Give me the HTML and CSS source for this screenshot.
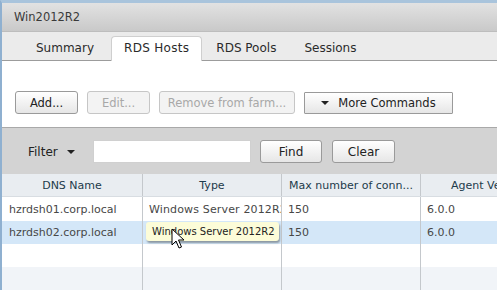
FILE: index.html
```html
<!DOCTYPE html>
<html>
<head>
<meta charset="utf-8">
<link rel="stylesheet" href="styles.css">
</head>
<body>
<div class="app">
  <div class="titlebar">Win2012R2</div>
  <div class="tabs">
    <div class="tab">Summary</div>
    <div class="tab active">RDS Hosts</div>
    <div class="tab">RDS Pools</div>
    <div class="tab">Sessions</div>
  </div>
  <div class="toolbar">
    <button class="btn btn-add">Add...</button>
    <button class="btn btn-edit disabled">Edit...</button>
    <button class="btn btn-remove disabled">Remove from farm...</button>
    <button class="btn btn-more"><span class="caret"></span>More Commands</button>
  </div>
  <div class="filterbar">
    <div class="filter-label">Filter <span class="caret"></span></div>
    <div class="filter-input"></div>
    <button class="btn btn-find">Find</button>
    <button class="btn btn-clear">Clear</button>
  </div>
  <div class="grid">
    <div class="row header">
      <div class="cell c1">DNS Name</div>
      <div class="cell c2">Type</div>
      <div class="cell c3">Max number of conn...</div>
      <div class="cell c4">Agent Version</div>
    </div>
    <div class="row first">
      <div class="cell c1">hzrdsh01.corp.local</div>
      <div class="cell c2">Windows Server 2012R2</div>
      <div class="cell c3">150</div>
      <div class="cell c4">6.0.0</div>
    </div>
    <div class="row selected">
      <div class="cell c1">hzrdsh02.corp.local</div>
      <div class="cell c2 has-tip">
        <div class="tooltip">Windows Server 2012R2</div>
        <svg class="cursor" width="14" height="22" viewBox="0 0 14 22"><path d="M1 1 L1 17 L5 13 L8 20 L10.5 19 L7.5 12 L13 12 Z" fill="#fff" stroke="#000" stroke-width="1"/></svg>
      </div>
      <div class="cell c3">150</div>
      <div class="cell c4">6.0.0</div>
    </div>
    <div class="row">
      <div class="cell c1"></div>
      <div class="cell c2"></div>
      <div class="cell c3"></div>
      <div class="cell c4"></div>
    </div>
    <div class="row alt">
      <div class="cell c1"></div>
      <div class="cell c2"></div>
      <div class="cell c3"></div>
      <div class="cell c4"></div>
    </div>
  </div>
</div>
</body>
</html>
```

FILE: styles.css
```css
html, body {
  margin: 0;
  padding: 0;
  width: 497px;
  height: 290px;
  overflow: hidden;
  background: #fff;
  font-family: "DejaVu Sans", Verdana, sans-serif;
}
.app {
  width: 497px;
  height: 290px;
  box-sizing: border-box;
  border-left: 2px solid #8fb0d0;
  border-top: 3px solid #a9c4dc;
  display: flex;
  flex-direction: column;
  overflow: hidden;
}
.titlebar {
  height: 29px;
  flex: none;
  box-sizing: border-box;
  padding-left: 12px;
  line-height: 29px;
  font-size: 11.5px;
  color: #3a3a3a;
  background: linear-gradient(#e2e2e2, #c9c9c9);
  border-bottom: 1px solid #bdbdbd;
}
.tabs {
  height: 29px;
  flex: none;
  box-sizing: border-box;
  display: flex;
  align-items: flex-end;
  background: #ebebeb;
  border-bottom: 1px solid #9c9c9c;
  padding-left: 20px;
}
.tab {
  height: 24px;
  box-sizing: border-box;
  line-height: 23px;
  padding: 0 13px;
  font-size: 12px;
  color: #2a2a2a;
  border: 1px solid transparent;
  border-bottom: none;
  border-radius: 4px 4px 0 0;
}
.tab.active {
  background: #fff;
  border-color: #cfcfcf;
  height: 25px;
  margin-bottom: -1px;
  margin-left: 3px;
  padding: 0 12px;
  letter-spacing: 0.3px;
}
.toolbar {
  height: 66px;
  flex: none;
  box-sizing: border-box;
  padding: 30px 0 0 13px;
  display: flex;
  align-items: flex-start;
  gap: 9px;
  background: #fff;
}
.btn {
  height: 23px;
  box-sizing: border-box;
  font-family: "DejaVu Sans", Verdana, sans-serif;
  font-size: 11.5px;
  color: #222;
  border: 1px solid #9a9a9a;
  border-radius: 3px;
  background: linear-gradient(#ffffff, #e6e6e6);
  padding: 0;
  display: flex;
  align-items: center;
  justify-content: center;
}
.btn.disabled {
  color: #a8a8a8;
  border-color: #c6c6c6;
  background: #f3f3f3;
}
.btn-add { width: 63px; }
.btn-edit { width: 63px; }
.btn-remove { width: 136px; }
.btn-more { width: 149px; margin-top: 1px; height: 22px; border-radius: 1px; }
.caret {
  display: inline-block;
  width: 0;
  height: 0;
  border-left: 4px solid transparent;
  border-right: 4px solid transparent;
  border-top: 4px solid #222;
  vertical-align: middle;
}
.btn-more .caret { margin-right: 9px; }
.filterbar {
  height: 47px;
  flex: none;
  box-sizing: border-box;
  background: #d3d3d3;
  border-top: 1px solid #a9a9a9;
  display: flex;
  align-items: center;
  padding-left: 26px;
  padding-top: 1px;
}
.filter-label {
  font-size: 12px;
  color: #222;
  width: 65px;
}
.filter-label .caret { margin-left: 5px; }
.filter-input {
  width: 158px;
  height: 23px;
  background: #fff;
  border: 1px solid #d0d0d0;
  box-sizing: border-box;
}
.btn-find { width: 62px; margin-left: 9px; font-size: 12px; }
.btn-clear { width: 63px; margin-left: 10px; font-size: 12px; }
.grid {
  flex: 1;
  display: flex;
  flex-direction: column;
  overflow: hidden;
}
.row {
  display: flex;
  height: 23px;
  flex: none;
  background: #fff;
}
.row.header {
  height: 22px;
  background: #e9edf1;
  border-bottom: 1px solid #d8dde2;
}
.row.header .cell {
  color: #1d3b4b;
  justify-content: center;
  padding-left: 0;
}
.row.first { height: 24px; }
.row.selected { background: #d4e7f8; }
.row.alt { background: #f1f4f8; height: 24px; }
.cell {
  flex: none;
  box-sizing: border-box;
  display: flex;
  align-items: center;
  padding-left: 6px;
  font-size: 11px;
  color: #474747;
  white-space: nowrap;
  overflow: hidden;
  border-right: 1px solid #c4c8cc;
}
.row.first .c2 { letter-spacing: 0.15px; }
.c1 { width: 141px; padding-left: 7px; }
.c2 { width: 139px; }
.c3 { width: 139px; }
.c4 { width: 120px; border-right: none; }
.row.header .c4 { justify-content: flex-start; padding-left: 30px; }
.has-tip { position: relative; overflow: visible; }
.row.selected .c2 { z-index: 2; }
.tooltip {
  position: absolute;
  left: 3px;
  top: 1px;
  height: 19px;
  width: 133px;
  box-sizing: border-box;
  background: #fcfcd8;
  border-radius: 3px;
  box-shadow: 1px 2px 2px rgba(0,0,0,0.35);
  font-size: 10px;
  color: #222;
  padding-left: 6px;
  line-height: 19px;
}
.cursor {
  position: absolute;
  left: 28px;
  top: 7px;
}
```
